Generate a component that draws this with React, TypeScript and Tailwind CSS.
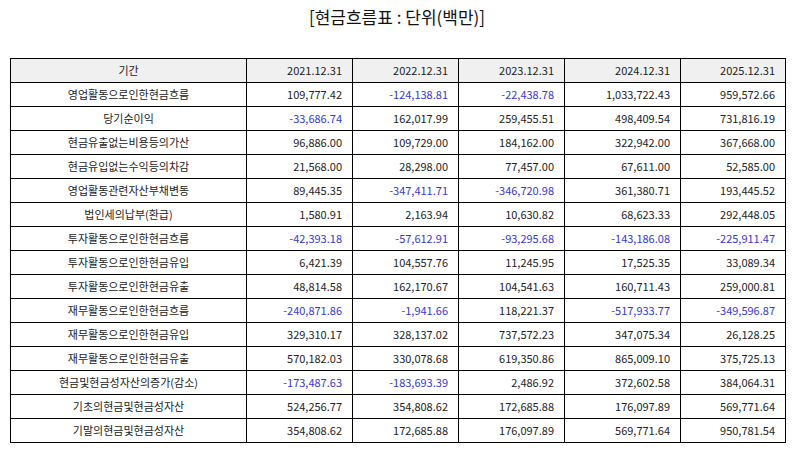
const years = ['2021.12.31', '2022.12.31', '2023.12.31', '2024.12.31', '2025.12.31'];

const rows: [string, string[]][] = [
  ['영업활동으로인한현금흐름', ['109,777.42', '-124,138.81', '-22,438.78', '1,033,722.43', '959,572.66']],
  ['당기순이익', ['-33,686.74', '162,017.99', '259,455.51', '498,409.54', '731,816.19']],
  ['현금유출없는비용등의가산', ['96,886.00', '109,729.00', '184,162.00', '322,942.00', '367,668.00']],
  ['현금유입없는수익등의차감', ['21,568.00', '28,298.00', '77,457.00', '67,611.00', '52,585.00']],
  ['영업활동관련자산부채변동', ['89,445.35', '-347,411.71', '-346,720.98', '361,380.71', '193,445.52']],
  ['법인세의납부(환급)', ['1,580.91', '2,163.94', '10,630.82', '68,623.33', '292,448.05']],
  ['투자활동으로인한현금흐름', ['-42,393.18', '-57,612.91', '-93,295.68', '-143,186.08', '-225,911.47']],
  ['투자활동으로인한현금유입', ['6,421.39', '104,557.76', '11,245.95', '17,525.35', '33,089.34']],
  ['투자활동으로인한현금유출', ['48,814.58', '162,170.67', '104,541.63', '160,711.43', '259,000.81']],
  ['재무활동으로인한현금흐름', ['-240,871.86', '-1,941.66', '118,221.37', '-517,933.77', '-349,596.87']],
  ['재무활동으로인한현금유입', ['329,310.17', '328,137.02', '737,572.23', '347,075.34', '26,128.25']],
  ['재무활동으로인한현금유출', ['570,182.03', '330,078.68', '619,350.86', '865,009.10', '375,725.13']],
  ['현금및현금성자산의증가(감소)', ['-173,487.63', '-183,693.39', '2,486.92', '372,602.58', '384,064.31']],
  ['기초의현금및현금성자산', ['524,256.77', '354,808.62', '172,685.88', '176,097.89', '569,771.64']],
  ['기말의현금및현금성자산', ['354,808.62', '172,685.88', '176,097.89', '569,771.64', '950,781.54']],
];

export default function App() {
  return (
    <div className="w-[794px] h-[452px] bg-white text-[#222] font-['Noto_Sans_CJK_KR',sans-serif] overflow-hidden">
      <div className="pt-[5px] text-center text-[17px] leading-[24px] text-[#111]">[현금흐름표 : 단위(백만)]</div>

      <div className="px-[10px] mt-[29px]">
        <table className="w-[775px] table-fixed border-collapse border border-black text-[11px]">
          <colgroup>
            <col className="w-[236px]" />
            <col className="w-[106px]" />
            <col className="w-[106px]" />
            <col className="w-[106px]" />
            <col className="w-[116px]" />
            <col className="w-[105px]" />
          </colgroup>
          <thead>
            <tr className="h-[24px] bg-[#f0f0f0]">
              <th className="border border-black font-normal text-center">기간</th>
              {years.map(y => (
                <th key={y} className="border border-black font-normal text-right pr-[10px]">{y}</th>
              ))}
            </tr>
          </thead>
          <tbody>
            {rows.map(([label, vals]) => (
              <tr key={label} className="h-[24px]">
                <td className="border border-black text-center">{label}</td>
                {vals.map((v, i) => (
                  <td
                    key={i}
                    className={`border border-black text-right pr-[10px] ${v.startsWith('-') ? 'text-[#3636d6]' : ''}`}
                  >
                    {v}
                  </td>
                ))}
              </tr>
            ))}
          </tbody>
        </table>
      </div>
    </div>
  );
}
